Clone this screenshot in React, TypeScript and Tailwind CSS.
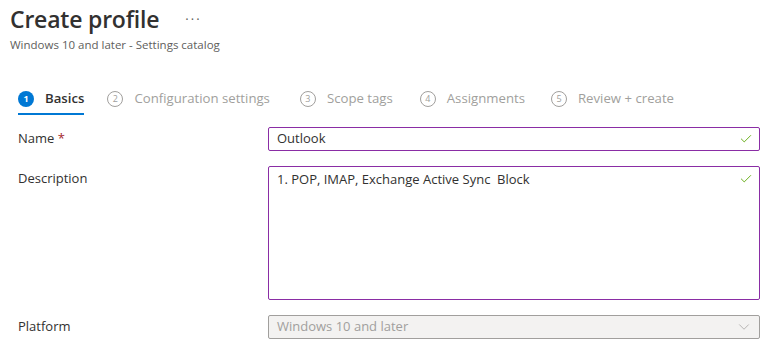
import { Check, ChevronDown } from 'lucide-react';

const steps = [
  { n: 1, label: 'Basics', active: true, gap: 'mr-[23px]' },
  { n: 2, label: 'Configuration settings', gap: 'mr-[30px]' },
  { n: 3, label: 'Scope tags', gap: 'mr-[27px]' },
  { n: 4, label: 'Assignments', gap: 'mr-[26px]' },
  { n: 5, label: 'Review + create', gap: '' },
];

export default function App() {
  return (
    <div className="w-[768px] h-[348px] overflow-hidden bg-white text-[#323130] font-['Open_Sans',sans-serif]">
      <div className="pl-[10px] pt-[3px]">
        <div className="flex items-center h-[32px]">
          <h1 className="text-[23px] font-semibold leading-none tracking-[-0.2px]">Create profile</h1>
          <span className="ml-[26px] text-[13px] text-[#605e5c] tracking-[2px] mt-[1px]">···</span>
        </div>
        <div className="text-[11.5px] text-[#605e5c] leading-none mt-[4px]">Windows 10 and later - Settings catalog</div>
      </div>

      <div className="flex pl-[18px] mt-[34px] h-[30px]">
        {steps.map((s) => (
          <div key={s.n} className={`flex flex-col ${s.gap}`}>
            <div className="flex items-center h-[28px]">
              {s.active ? (
                <span className="w-[16px] h-[16px] rounded-full bg-[#0078d4] text-white text-[9px] font-bold flex items-center justify-center">{s.n}</span>
              ) : (
                <span className="w-[16px] h-[16px] rounded-full border border-[#a19f9d] text-[#a19f9d] text-[9px] flex items-center justify-center">{s.n}</span>
              )}
              <span className={`ml-[11px] text-[13.2px] ${s.active ? 'text-[#323130] font-semibold' : 'text-[#a19f9d]'}`}>{s.label}</span>
            </div>
            {s.active && <div className="h-[2px] bg-[#0078d4]" />}
          </div>
        ))}
      </div>

      <div className="pl-[18px] pr-[8px] mt-[12px] text-[13px]">
        <div className="flex items-center">
          <div className="w-[250px]">Name <span className="text-[#a4262c]">*</span></div>
          <div className="flex-1 h-[24px] border border-[#8a2da5] rounded-[2px] flex items-center pl-[8px] pr-[6px]">
            <span className="flex-1">Outlook</span>
            <Check size={14} className="text-[#57a300]" strokeWidth={1.5} />
          </div>
        </div>
        <div className="flex mt-[15px]">
          <div className="w-[250px] pt-[3px]">Description</div>
          <div className="flex-1 h-[134px] border border-[#8a2da5] rounded-[2px] flex items-start pl-[8px] pr-[6px] pt-[3px]">
            <span className="flex-1">1. POP, IMAP, Exchange Active Sync&nbsp; Block</span>
            <Check size={14} className="text-[#57a300] mt-[2px]" strokeWidth={1.5} />
          </div>
        </div>
        <div className="flex items-center mt-[15px]">
          <div className="w-[250px]">Platform</div>
          <div className="flex-1 h-[24px] border border-[#a19f9d] bg-[#f3f2f1] rounded-[2px] flex items-center pl-[8px] pr-[6px] text-[#a19f9d]">
            <span className="flex-1">Windows 10 and later</span>
            <ChevronDown size={18} strokeWidth={1} className="text-[#a19f9d]" />
          </div>
        </div>
      </div>
    </div>
  );
}
